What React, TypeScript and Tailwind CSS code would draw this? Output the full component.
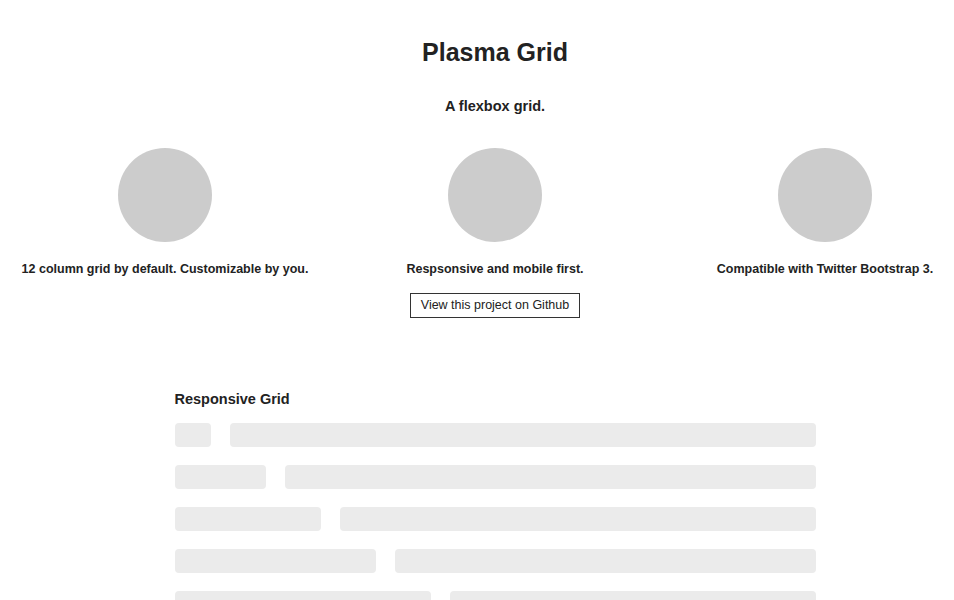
const features = [
  '12 column grid by default. Customizable by you.',
  'Respsonsive and mobile first.',
  'Compatible with Twitter Bootstrap 3.',
];

const rows = [1, 2, 3, 4, 5, 6, 7];

export default function App() {
  return (
    <div className="w-[954px] h-[600px] overflow-hidden bg-white text-[#222]" style={{ fontFamily: '"Liberation Sans", Arial, sans-serif' }}>
      <div className="w-[990px]">
        <header className="pt-[36px] text-center">
          <h1 className="text-[25px] font-bold leading-[32px]">Plasma Grid</h1>
          <p className="mt-[28px] text-[14.5px] font-bold leading-[20px]">A flexbox grid.</p>
        </header>

        <section className="mt-[32px] grid grid-cols-3">
          {features.map((f) => (
            <div key={f} className="flex flex-col items-center">
              <div className="w-[94px] h-[94px] rounded-full bg-[#cccccc]" />
              <p className="mt-[20px] text-[12.5px] font-bold leading-[14px] whitespace-nowrap">{f}</p>
            </div>
          ))}
        </section>

        <div className="mt-[17px] flex justify-center">
          <button className="h-[25px] w-[170px] border border-[#333] text-[12.5px] text-[#222]">
            View this project on Github
          </button>
        </div>

        <section className="mx-auto mt-[72px] w-[641px]">
          <h2 className="text-[14.5px] font-bold leading-[18px]">Responsive Grid</h2>
          <div className="mt-[15px] flex flex-col gap-[18px]">
            {rows.map((n) => (
              <div key={n} className="flex gap-[19px]">
                <div className="h-[24px] rounded-[4px] bg-[#ebebeb]" style={{ width: n * 55 - 19 }} />
                <div className="h-[24px] flex-1 rounded-[4px] bg-[#ebebeb]" />
              </div>
            ))}
          </div>
        </section>
      </div>
    </div>
  );
}
